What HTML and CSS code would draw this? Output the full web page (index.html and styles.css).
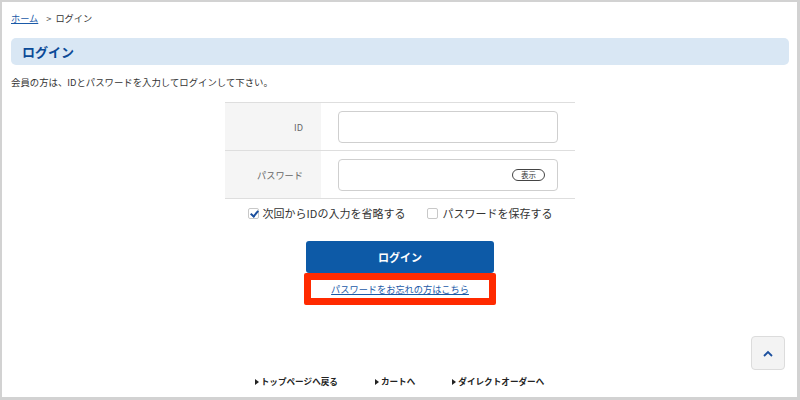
FILE: index.html
```
<!DOCTYPE html>
<html lang="ja">
<head>
    <meta charset="UTF-8">
    <meta name="viewport" content="width=device-width, initial-scale=1.0">
    <title>ログイン</title>
    <link rel="stylesheet" href="styles.css">
</head>
<body>
    <div class="frame">
        <div class="crumb">
            <a href="#">ホーム</a>
            <span class="sep">&gt;</span>
            <span>ログイン</span>
        </div>
        <h1 class="title">ログイン</h1>
        <p class="lead">会員の方は、IDとパスワードを入力してログインして下さい。</p>
        <form class="login">
            <table class="fields">
                <tr>
                    <th>ID</th>
                    <td><div class="box"></div></td>
                </tr>
                <tr>
                    <th>パスワード</th>
                    <td><div class="box"><span class="show">表示</span></div></td>
                </tr>
            </table>
            <div class="opts">
                <label class="opt"><span class="check on"></span>次回からIDの入力を省略する</label>
                <label class="opt"><span class="check"></span>パスワードを保存する</label>
            </div>
            <button type="button" class="btn">ログイン</button>
            <div class="forgot"><a href="#">パスワードをお忘れの方はこちら</a></div>
        </form>
        <a href="#" class="totop">
            <svg width="10" height="7" viewBox="0 0 10 7"><path d="M1 6 L5 2 L9 6" fill="none" stroke="#1b4f9e" stroke-width="1.8"/></svg>
        </a>
        <ul class="foot">
            <li>トップページへ戻る</li>
            <li>カートへ</li>
            <li>ダイレクトオーダーへ</li>
        </ul>
    </div>
</body>
</html>
```

FILE: styles.css
```
*{
    box-sizing: border-box;
}
body{
    margin: 0;
    font-family: "Noto Sans CJK JP", "Noto Sans", sans-serif;
    color: #333;
    background: #fff;
}
div.frame{
    position: relative;
    width: 800px;
    height: 400px;
    border: 2px solid #d2d2d2;
    border-right-width: 3px;
    border-bottom-width: 3px;
    padding: 10px 8px 0 9px;
    overflow: hidden;
}
div.crumb{
    font-size: 9.2px;
    line-height: 12px;
    display: flex;
    align-items: center;
}
div.crumb a{
    color: #1a5aa8;
    text-decoration: underline;
}
div.crumb .sep{
    margin: 0 4px 0 8px;
    color: #555;
}
h1.title{
    margin: 14px 0 0;
    height: 27px;
    line-height: 27px;
    padding-left: 11px;
    font-size: 13px;
    font-weight: bold;
    color: #0b4a97;
    background: #d9e7f4;
    border-radius: 5px;
}
p.lead{
    margin: 11px 0 0;
    font-size: 9.4px;
    line-height: 12px;
}
form.login{
    display: flex;
    flex-direction: column;
    align-items: center;
}
table.fields{
    margin-top: 14px;
    width: 350px;
    border-collapse: collapse;
}
table.fields tr{
    border-top: 1px solid #dedede;
    border-bottom: 1px solid #dedede;
}
table.fields th{
    width: 96px;
    background: #f5f5f5;
    font-size: 9.2px;
    font-weight: normal;
    color: #666;
    text-align: right;
    padding: 0 18px 0 0;
}
table.fields td{
    padding: 8px 17px 7px 17px;
}
div.box{
    height: 32px;
    border: 1px solid #cfcfcf;
    border-radius: 4px;
    display: flex;
    align-items: center;
    justify-content: flex-end;
    padding-right: 12px;
}
span.show{
    font-size: 7.5px;
    line-height: 10px;
    padding: 0 8px;
    border: 1px solid #444;
    border-radius: 8px;
    color: #333;
}
div.opts{
    margin-top: 7px;
    display: flex;
    gap: 22px;
    font-size: 11px;
    line-height: 14px;
}
label.opt{
    display: flex;
    align-items: center;
    gap: 4px;
}
span.check{
    width: 11px;
    height: 11px;
    border: 1px solid #c8c8c8;
    border-radius: 2px;
    background: #fff;
    position: relative;
}
span.check.on::after{
    content: "";
    position: absolute;
    left: 3px;
    top: 0;
    width: 3px;
    height: 6px;
    border: solid #1a4f9e;
    border-width: 0 2px 2px 0;
    transform: rotate(40deg);
}
button.btn{
    margin-top: 21px;
    width: 188px;
    height: 32px;
    border: 0;
    border-radius: 3px;
    background: #0d5aa7;
    color: #fff;
    font-family: inherit;
    font-size: 11px;
    font-weight: bold;
}
div.forgot{
    width: 192px;
    height: 32px;
    border: 7px solid #ff2a00;
    border-radius: 2px;
    display: flex;
    align-items: center;
    justify-content: center;
}
div.forgot a{
    font-size: 9.2px;
    color: #1a5aa8;
    text-decoration: underline;
}
a.totop{
    position: absolute;
    left: 749px;
    top: 334px;
    width: 34px;
    height: 34px;
    background: #f3f3f3;
    border: 1px solid #dcdcdc;
    border-radius: 4px;
    display: flex;
    align-items: center;
    justify-content: center;
}
ul.foot{
    list-style: none;
    margin: 0;
    padding: 0;
    position: absolute;
    left: 0;
    right: 0;
    top: 373px;
    display: flex;
    justify-content: center;
    gap: 37px;
    font-size: 8.6px;
    line-height: 12px;
    font-weight: bold;
    color: #222;
}
ul.foot li::before{
    content: "";
    display: inline-block;
    border-left: 4px solid #222;
    border-top: 3px solid transparent;
    border-bottom: 3px solid transparent;
    margin-right: 2px;
    vertical-align: 0;
}
```
